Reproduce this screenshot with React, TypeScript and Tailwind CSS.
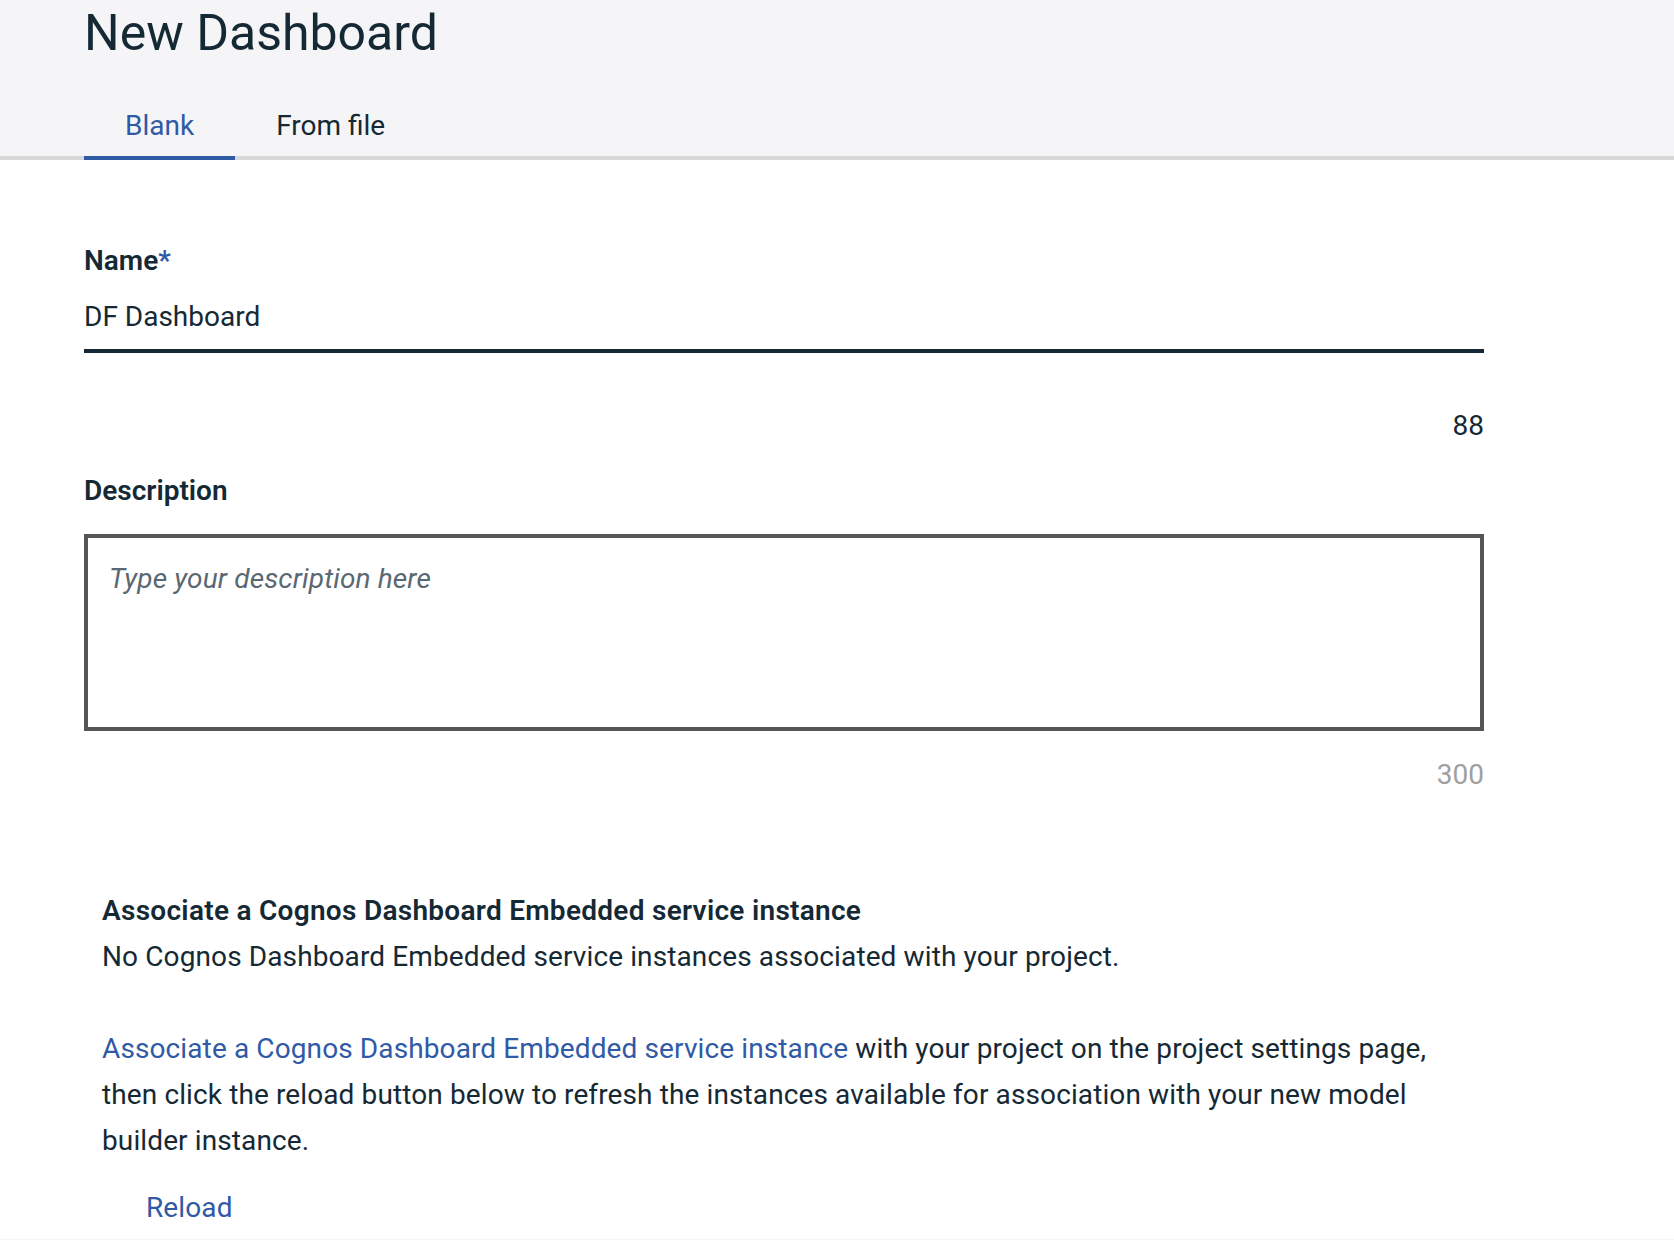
import { useState } from "react";

const tabs = ["Blank", "From file"];

export default function App() {
  const [active, setActive] = useState(0);
  const [name, setName] = useState("DF Dashboard");
  const [desc, setDesc] = useState("");

  return (
    <div className="min-h-screen bg-white font-['Roboto','Liberation_Sans',sans-serif] text-[#152935]">
      {/* Header */}
      <div className="bg-[#f5f5f7] pt-[3px]">
        <h1 className="px-[84px] text-[50px] leading-[60px] font-normal">New Dashboard</h1>
        <div className="mt-[46px] flex border-b-4 border-[#d8d8d8] pl-[84px]">
          {tabs.map((t, i) => (
            <button
              key={t}
              onClick={() => setActive(i)}
              className={`-mb-1 border-b-4 px-[41px] pb-[13px] text-[28px] leading-[34px] ${
                active === i ? "border-[#3059a6] text-[#3059a6]" : "border-transparent text-[#152935]"
              }`}
            >
              {t}
            </button>
          ))}
        </div>
      </div>

      {/* Form */}
      <div className="px-[84px]">
        <div className="w-[1400px]">
          <label className="mt-[84px] block text-[28px] leading-[34px] font-semibold">
            Name<span className="text-[#3059a6]">*</span>
          </label>
          <input
            value={name}
            onChange={(e) => setName(e.target.value)}
            className="mt-[22px] block w-full border-b-4 border-[#152935] bg-transparent pb-[15px] text-[28px] leading-[34px] outline-none"
          />
          <p className="mt-[56px] text-right text-[28px] leading-[34px]">{100 - name.length}</p>

          <label className="mt-[31px] block text-[28px] leading-[34px] font-semibold">Description</label>
          <textarea
            value={desc}
            onChange={(e) => setDesc(e.target.value)}
            placeholder="Type your description here"
            className="mt-[26px] block h-[197px] w-full resize-none border-4 border-[#565656] px-[21px] pt-[24px] text-[28px] leading-[34px] tracking-[0.005em] outline-none placeholder:italic placeholder:text-[#5a6872]"
          />
          <p className="mt-[27px] text-right text-[28px] leading-[34px] text-[#a0a0a0]">{300 - desc.length}</p>
        </div>

        {/* Service instance */}
        <div className="mt-[96px] w-[1400px] px-[18px] text-[28px] leading-[46px] tracking-[0.004em]">
          <h2 className="font-semibold tracking-[0.01em]">Associate a Cognos Dashboard Embedded service instance</h2>
          <p>No Cognos Dashboard Embedded service instances associated with your project.</p>
          <p className="mt-[46px]">
            <a href="#" className="text-[#3059a6]">
              Associate a Cognos Dashboard Embedded service instance
            </a>{" "}
            with your project on the project settings page, then click the reload button below to refresh the
            instances available for association with your new model builder instance.
          </p>
          <button className="mt-[21px] ml-[44px] text-[#3059a6]">Reload</button>
        </div>
      </div>

      <div className="mt-[8px] h-[20px] bg-[#f5f5f5]" />
    </div>
  );
}
